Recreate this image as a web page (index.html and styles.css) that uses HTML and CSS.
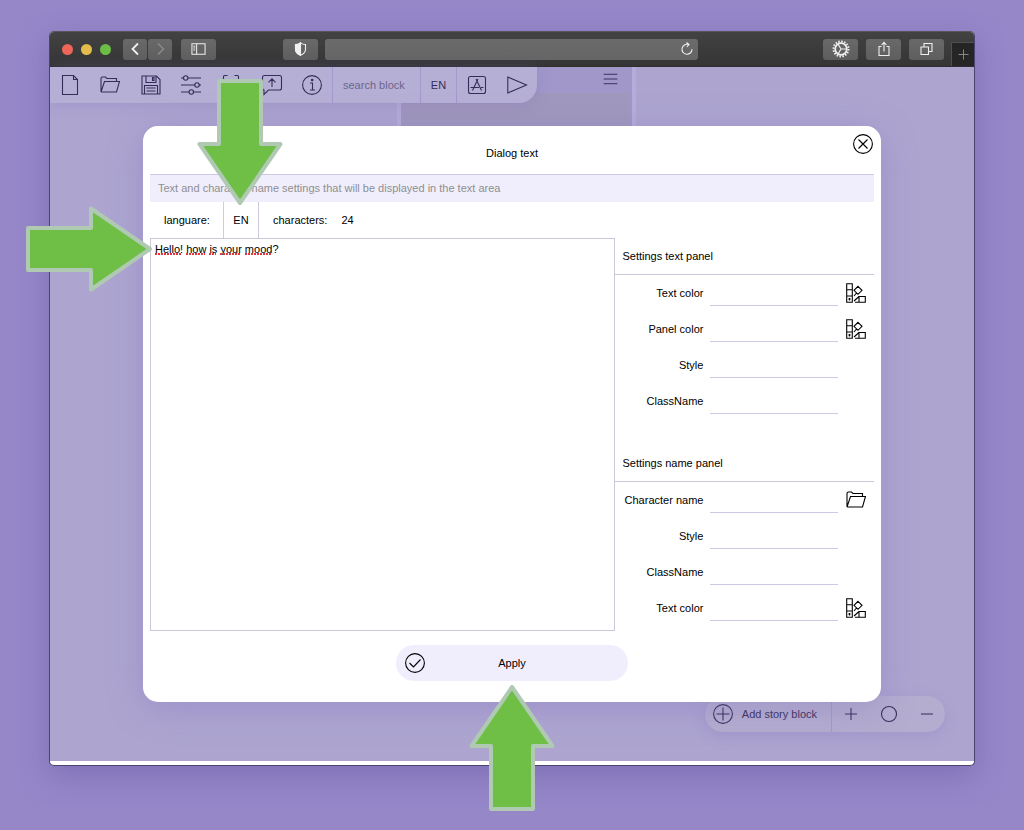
FILE: index.html
```html
<!DOCTYPE html>
<html lang="en">
<head>
<meta charset="utf-8">
<title>Dialog text</title>
<link rel="stylesheet" href="styles.css">
</head>
<body>
<svg class="sprite" aria-hidden="true">
  <symbol id="i-folder" viewBox="0 0 20 20"><path d="M1 17V3.500Q1 2 2.500 2H5.500L7 3.500H16.500V6.500M1 17H16.500L19.500 6.500H4.500L1 17"/></symbol>
  <symbol id="i-swatch" viewBox="0 0 20 20"><path d="M.7.700H6.300V19.300H.7ZM.7 6.800H6.300M.7 13H6.300M2.700 15.400L4.300 17M4.300 15.400L2.700 17M12 3.300L16 7.300L12 11.300L8 7.300ZM13 13.500H19.300V19.300H13ZM10.500 10L8 13M13 13.500L8 18M9 19.300H13"/></symbol>
</svg>

<div class="window">
  <header class="chrome">
    <div class="lights"><i class="red"></i><i class="yellow"></i><i class="green"></i></div>
    <div class="history">
      <button class="tool narrow" aria-label="Back"><svg viewBox="0 0 12 14"><path d="M8.500 1.500L3 7L8.500 12.500" stroke-width="1.800"/></svg></button>
      <button class="tool narrow faded" aria-label="Forward"><svg viewBox="0 0 12 14"><path d="M3.500 1.500L9 7L3.500 12.500" stroke-width="1.400"/></svg></button>
    </div>
    <button class="tool" aria-label="Sidebar"><svg viewBox="0 0 16 14"><path d="M1 1.500H15V12.500H1ZM6 1.500V12.500M2.500 4H4.500M2.500 6H4.500M2.500 8H4.500"/></svg></button>
    <button class="tool shield" aria-label="Privacy report"><svg viewBox="0 0 14 14"><path d="M7 .8Q9 2.500 12 2.500V7.500Q12 11 7 13.300Q2 11 2 7.500V2.500Q5 2.500 7 .8Z"/><path class="solid" d="M7 .8Q5 2.500 2 2.500V7.500Q2 11 7 13.300Z"/></svg></button>
    <div class="address">
      <input type="text" aria-label="Address">
      <button aria-label="Reload"><svg viewBox="0 0 14 14"><path d="M12 7.300A5 5 0 1 1 8.500 2.500M6.500.5L9 2.600L6.800 5"/></svg></button>
    </div>
    <div class="actions">
      <button class="tool" aria-label="Settings"><svg class="gear" viewBox="0 0 18 18"><circle cx="9" cy="9" r="7.500" stroke-width="2" stroke-dasharray="1.500 1.445"/><circle cx="9" cy="9" r="5.800" stroke-width="1.700"/><path d="M9 9L6 4M9 9H15M9 9L6 14" stroke-width="1.200"/></svg></button>
      <button class="tool" aria-label="Share"><svg class="share" viewBox="0 0 14 16"><path d="M4.500 5.500H2V14.500H12V5.500H9.500M7 10.500V1.500M4.500 4L7 1.300L9.500 4"/></svg></button>
      <button class="tool" aria-label="Tabs"><svg viewBox="0 0 14 14"><path d="M1.500 5H9V12.500H1.500ZM4.500 4.500V1.500H12.500V9.500H9.500"/></svg></button>
    </div>
    <button class="newtab" aria-label="New tab"><svg viewBox="0 0 12 12"><path d="M6 .5V11.500M.5 6H11.500"/></svg></button>
  </header>

  <main class="app">
    <div class="node">
      <button aria-label="Node menu"><svg viewBox="0 0 16 14"><path d="M0 1.500H16M0 7H16M0 12.500H16"/></svg></button>
      <div class="node-body"></div>
    </div>

    <nav class="toolbar">
      <div class="files">
        <button aria-label="New file"><svg viewBox="0 0 20 20"><path d="M2.500.5H13.500L17.500 4.500V19.500H2.500ZM13.500.5V4.500H17.500"/></svg></button>
        <button aria-label="Open"><svg><use href="#i-folder"/></svg></button>
        <button aria-label="Save"><svg viewBox="0 0 20 20"><path d="M1 1H15.500L19 4.500V19H1ZM5 1V7.500H15V1M11.500 2.500H13V5.500H11.500ZM3.500 19V10.500H16.500V19M5.500 13H14.500M5.500 16H14.500"/></svg></button>
        <button aria-label="Options"><svg viewBox="0 0 20 20"><path d="M0 3H2.500M7 3H20M0 10H14M18 10H20M0 17H8M12.500 17H20"/><circle cx="4.700" cy="3" r="2.200"/><circle cx="16" cy="10" r="2.200"/><circle cx="10.300" cy="17" r="2.200"/></svg></button>
        <button aria-label="Full screen"><svg viewBox="0 0 20 20"><path d="M2.500 4.500V1.500Q2.500.5 3.500.5H6.500M13.500.5H16.500Q17.500.5 17.500 1.500V4.500M2.500 15V18.500H6.500M13.500 18.500H17.500V15"/></svg></button>
        <button aria-label="Export"><svg viewBox="0 0 20 20"><path d="M2.500.5H17.500Q19.500.5 19.500 2.500V13Q19.500 15 17.500 15H6.500L2 19.500V15Q.5 15 .5 13V2.500Q.5.5 2.500.5ZM10 12V4M6.500 7.300L10 3.800L13.500 7.300"/></svg></button>
        <button aria-label="Information"><svg viewBox="0 0 20 20"><circle cx="10" cy="10" r="9.400"/><path d="M8 8H10.500V15M8 15H13"/><circle class="solid" cx="10.200" cy="5" r=".8"/></svg></button>
      </div>
      <input class="search" type="text" placeholder="search block" aria-label="Search block">
      <button class="lang">EN</button>
      <div class="run">
        <button aria-label="App"><svg viewBox="0 0 20 20"><rect x="1.500" y="1.500" width="17" height="17" rx="2"/><path d="M9 4L14.500 15.500M11 4L5.500 15.500M3.500 12.500H12M14 12.500H16.500"/></svg></button>
        <button aria-label="Play"><svg viewBox="0 0 20 20"><path d="M.8 2V18L19.500 10Z"/></svg></button>
      </div>
    </nav>

    <div class="dock">
      <button class="add"><svg viewBox="0 0 20 20"><circle cx="10" cy="10" r="9.400"/><path d="M10 3.500V16.500M3.500 10H16.500"/></svg>Add story block</button>
      <div class="zoom">
        <button aria-label="Zoom in"><svg viewBox="0 0 20 20"><path d="M10 4V16M4 10H16"/></svg></button>
        <button aria-label="Reset zoom"><svg viewBox="0 0 20 20"><circle cx="10" cy="10" r="7.500"/></svg></button>
        <button aria-label="Zoom out"><svg viewBox="0 0 20 20"><path d="M4 10H16"/></svg></button>
      </div>
    </div>

    <section class="dialog" role="dialog" aria-labelledby="dialog-title">
      <h1 id="dialog-title">Dialog text</h1>
      <button class="close" aria-label="Close"><svg viewBox="0 0 20 20"><circle cx="10" cy="10" r="9.400"/><path d="M5.500 5.500L14.500 14.500M14.500 5.500L5.500 14.500"/></svg></button>
      <p class="hint">Text and character name settings that will be displayed in the text area</p>
      <div class="meta">
        <span class="meta-label">languare:</span>
        <button class="meta-lang">EN</button>
        <span class="meta-count">characters:</span>
        <span>24</span>
      </div>
      <div class="content">
        <div class="editor">
          <textarea aria-label="Dialog text" spellcheck="false">Hello! how is your mood?</textarea>
          <svg class="spelling" viewBox="0 0 130 2" aria-hidden="true"><path d="M0 1H27M31 1H50M54 1H61M65 1H86M90 1H117"/></svg>
        </div>
        <div class="settings">
          <section>
            <h2>Settings text panel</h2>
            <div class="field"><label for="tc">Text color</label><input id="tc" type="text"><button aria-label="Pick text color"><svg><use href="#i-swatch"/></svg></button></div>
            <div class="field"><label for="pc">Panel color</label><input id="pc" type="text"><button aria-label="Pick panel color"><svg><use href="#i-swatch"/></svg></button></div>
            <div class="field"><label for="st">Style</label><input id="st" type="text"></div>
            <div class="field"><label for="cn">ClassName</label><input id="cn" type="text"></div>
          </section>
          <section>
            <h2>Settings name panel</h2>
            <div class="field"><label for="nm">Character name</label><input id="nm" type="text"><button aria-label="Choose character"><svg><use href="#i-folder"/></svg></button></div>
            <div class="field"><label for="ns">Style</label><input id="ns" type="text"></div>
            <div class="field"><label for="nc">ClassName</label><input id="nc" type="text"></div>
            <div class="field"><label for="nt">Text color</label><input id="nt" type="text"><button aria-label="Pick name color"><svg><use href="#i-swatch"/></svg></button></div>
          </section>
        </div>
      </div>
      <button class="apply"><svg viewBox="0 0 20 20"><circle cx="10" cy="10" r="9.400"/><path d="M4.500 10L8.500 14L15.500 6.500"/></svg><span>Apply</span></button>
    </section>
  </main>
</div>

<svg class="arrow arrow-down" viewBox="0 0 86 128" aria-hidden="true"><path d="M22 2H64V65H83.500L43 124L2.500 65H22Z"/></svg>
<svg class="arrow arrow-right" viewBox="0 0 128 86" aria-hidden="true"><path d="M2 22V64H65V83.500L124 43L65 2.500V22Z"/></svg>
<svg class="arrow arrow-up" viewBox="0 0 86 128" aria-hidden="true"><path d="M22 125H64V62H83.500L43 3L2.500 62H22Z"/></svg>
</body>
</html>
```
FILE: styles.css
```css
* { box-sizing: border-box; }

body {
  position: relative;
  display: flex;
  min-height: 100vh;
  margin: 0;
  padding: 31px 49px 64px;
  background: #9587c8;
  color: #000;
  font: 11px/16px "Liberation Sans", Arial, sans-serif;
}

button, input, textarea {
  margin: 0;
  padding: 0;
  border: 0;
  border-radius: 0;
  outline: 0;
  background: none;
  color: inherit;
  font: inherit;
}

button {
  display: flex;
  align-items: center;
  justify-content: center;
}

h1, h2, p { margin: 0; font-size: 11px; font-weight: 400; }

svg {
  width: 20px;
  height: 20px;
  fill: none;
  stroke: currentColor;
  stroke-width: 1.1;
  overflow: visible;
}

.solid { fill: currentColor; }

.sprite { position: absolute; width: 0; height: 0; }

.window {
  display: flex;
  flex: 1;
  flex-direction: column;
  min-width: 0;
  overflow: hidden;
  border: 1px solid #4b4370;
  border-top-color: #58555f;
  border-radius: 5px;
  background: #fff;
  box-shadow: 0 10px 30px rgba(90, 70, 150, 0.35);
}

/* Browser chrome */

.chrome {
  display: flex;
  align-items: center;
  height: 35px;
  padding-left: 12px;
  border-bottom: 1px solid #2e2e2f;
  background: linear-gradient(#424243, #353536);
  color: #f0f0f0;
}

.lights { display: flex; gap: 8px; margin-right: 12px; }
.lights i { width: 11px; height: 11px; border-radius: 50%; }
.red { background: #ee6559; }
.yellow { background: #e2bd4b; }
.green { background: #6cbd45; }

.history { display: flex; gap: 1px; margin-right: 9px; }

.tool {
  width: 35px;
  height: 21px;
  border-radius: 3px;
  background: linear-gradient(#69696a, #5e5e5f);
}
.tool svg { width: 15px; height: 14px; }
.tool .gear { width: 18px; height: 18px; }
.tool .share { width: 14px; height: 16px; }
.narrow { width: 24px; }
.faded { color: #8c8c8c; }
.shield { margin: 0 7px 0 67px; }

.address {
  display: flex;
  flex: 1;
  align-items: center;
  height: 21px;
  padding-right: 4px;
  border-radius: 3px;
  background: linear-gradient(#6b6b6c, #656566);
}
.address input { flex: 1; min-width: 0; }
.address svg { display: block; width: 14px; height: 14px; }

.actions { display: flex; gap: 8px; margin: 0 7px 0 125px; }

.newtab {
  align-self: flex-end;
  width: 23px;
  height: 24px;
  border: 1px solid #505051;
  border-width: 1px 0 0 1px;
  background: #252526;
  color: #858585;
}
.newtab svg { width: 11px; height: 11px; }

/* Application canvas */

.app {
  position: relative;
  display: grid;
  flex: 1;
  margin-bottom: 4px;
  padding: 59px 93px;
  background: #ada5d0;
  color: #352d59;
}

.node {
  position: absolute;
  top: 0;
  left: 347px;
  width: 239px;
  height: 120px;
  padding: 0 6px 0 7px;
  border: solid #b5add9;
  border-width: 0 4px;
  background: #a197c9;
}
.node button { height: 24px; margin: 0 8px 2px auto; }
.node svg { width: 15px; height: 12px; }
.node-body {
  height: 90px;
  margin: 0 -3px 0 -7px;
  border-radius: 4px;
  background: #a098bd;
}

.toolbar {
  position: absolute;
  top: 0;
  left: 0;
  display: flex;
  height: 36px;
  border-radius: 0 0 18px 0;
  background: #b6afd5;
  box-shadow: 0 2px 14px rgba(130, 112, 190, 0.3);
}
.toolbar > * + * { border-left: 1px solid #a399cc; }
.files { display: flex; width: 282px; }
.files button { flex: 1; }
.search { width: 88px; padding: 0 10px; }
.search::placeholder { color: #6c658c; opacity: 1; }
.lang { width: 36px; }
.run { display: flex; gap: 20px; padding: 0 10px; }

.dock {
  position: absolute;
  right: 29px;
  bottom: 29px;
  display: flex;
  height: 36px;
  border-radius: 18px;
  background: #b4adcf;
  box-shadow: 0 4px 14px rgba(130, 112, 190, 0.25);
}
.add { gap: 9px; padding: 0 14px 0 8px; }
.zoom {
  display: flex;
  gap: 18px;
  padding: 0 8px 0 9px;
  border-left: 1px solid #a399cc;
}

/* Dialog */

.dialog {
  position: relative;
  display: flex;
  flex-direction: column;
  padding: 7px 7px 21px;
  border-radius: 15px;
  background: #fff;
  box-shadow: 0 6px 34px rgba(130, 112, 190, 0.4);
  color: #000;
}

.dialog h1 { line-height: 41px; text-align: center; }

.close {
  position: absolute;
  top: 8px;
  right: 8px;
}

.hint {
  padding: 5px 8px 6px;
  border-top: 1px solid #cfcae4;
  background: #f0eefd;
  color: #8f8f8f;
}

.meta { display: flex; align-items: center; height: 36px; }
.meta-label { width: 73px; padding-left: 14px; }
.meta-lang {
  align-self: stretch;
  width: 36px;
  border: solid #cfcae4;
  border-width: 0 1px;
}
.meta-count { margin: 0 14px; }

.content {
  display: grid;
  flex: 1;
  grid-template-columns: minmax(0, 9fr) minmax(0, 5fr);
}

.editor { position: relative; display: flex; }
.editor textarea {
  flex: 1;
  min-width: 0;
  padding: 2px 4px;
  border: 1px solid #cbc8dc;
  resize: none;
}
.spelling {
  position: absolute;
  top: 15px;
  left: 5px;
  width: 130px;
  height: 2px;
  stroke: #e8323c;
  stroke-width: 2;
  stroke-dasharray: 2 1;
}

.settings {
  display: flex;
  flex-direction: column;
  gap: 26px;
}
.settings h2 {
  padding: 10px 7px;
  border-bottom: 1px solid #cbc8dc;
}
.field {
  display: grid;
  grid-template-columns: 88px minmax(0, 1fr) 36px;
  align-items: center;
  height: 36px;
}
.field label { text-align: right; }
.field input {
  height: 25px;
  margin-left: 7px;
  border-bottom: 1px solid #cfcae4;
}
.field button { height: 36px; }

.apply {
  position: relative;
  align-self: center;
  width: 32%;
  height: 36px;
  margin-top: 14px;
  border-radius: 18px;
  background: #f0eefd;
}
.apply svg { position: absolute; left: 9px; }

/* Pointer arrows drawn over the page */

.arrow {
  position: absolute;
  width: 86px;
  height: 128px;
  fill: #6fbe45;
  stroke: #b0c9b3;
  stroke-width: 4;
  stroke-linejoin: round;
}
.arrow-down { top: 79px; left: 197px; }
.arrow-right { top: 206px; left: 26px; width: 128px; height: 86px; }
.arrow-up { bottom: 18px; left: calc(50% - 43px); }
```
